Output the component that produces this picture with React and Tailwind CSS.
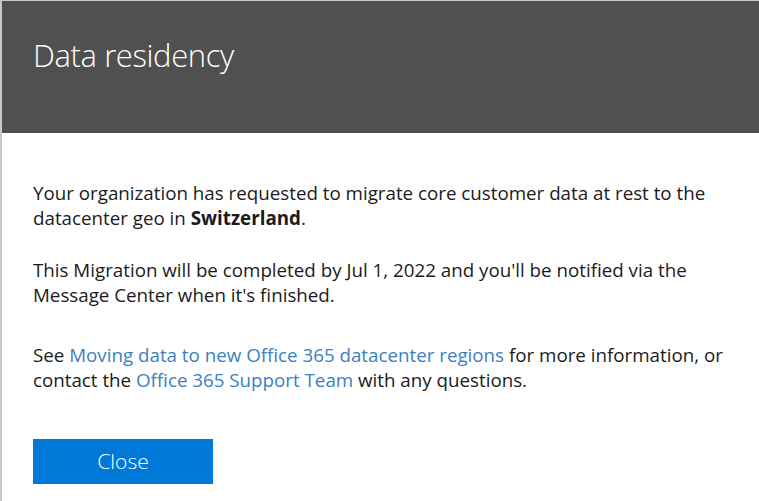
import React from 'react';

// Data residency dialog
export default function App() {
  return (
    <div
      className="h-[501px] w-[759px] overflow-hidden border-l-2 border-t border-[#c8c8c8] bg-white"
      style={{ fontFamily: '"Open Sans", "Noto Sans", sans-serif' }}
    >
      <div className="flex h-[132px] items-start bg-[#505050] px-[31px] pt-[30px]">
        <h1 className="text-[31px] font-light leading-[48px] tracking-[-0.4px] text-white">
          Data residency
        </h1>
      </div>

      <div className="px-[31px] pt-[47px] text-[18.75px] leading-[25px] text-[#1b1b1b]">
        <p>
          Your organization has requested to migrate core customer data at rest to the
          <br />
          datacenter geo in <b className="font-bold">Switzerland</b>.
        </p>
        <p className="mt-[27px]">
          This Migration will be completed by Jul 1, 2022 and you'll be notified via the
          <br />
          Message Center when it's finished.
        </p>
        <p className="mt-[35px]">
          See <a className="text-[#3a80c3]">Moving data to new Office 365 datacenter regions</a> for more information, or
          <br />
          contact the <a className="text-[#3a80c3]">Office 365 Support Team</a> with any questions.
        </p>

        <button className="mt-[47px] flex h-[45px] w-[180px] items-center justify-center bg-[#0078d7] text-[21px] font-light text-white">
          Close
        </button>
      </div>
    </div>
  );
}
